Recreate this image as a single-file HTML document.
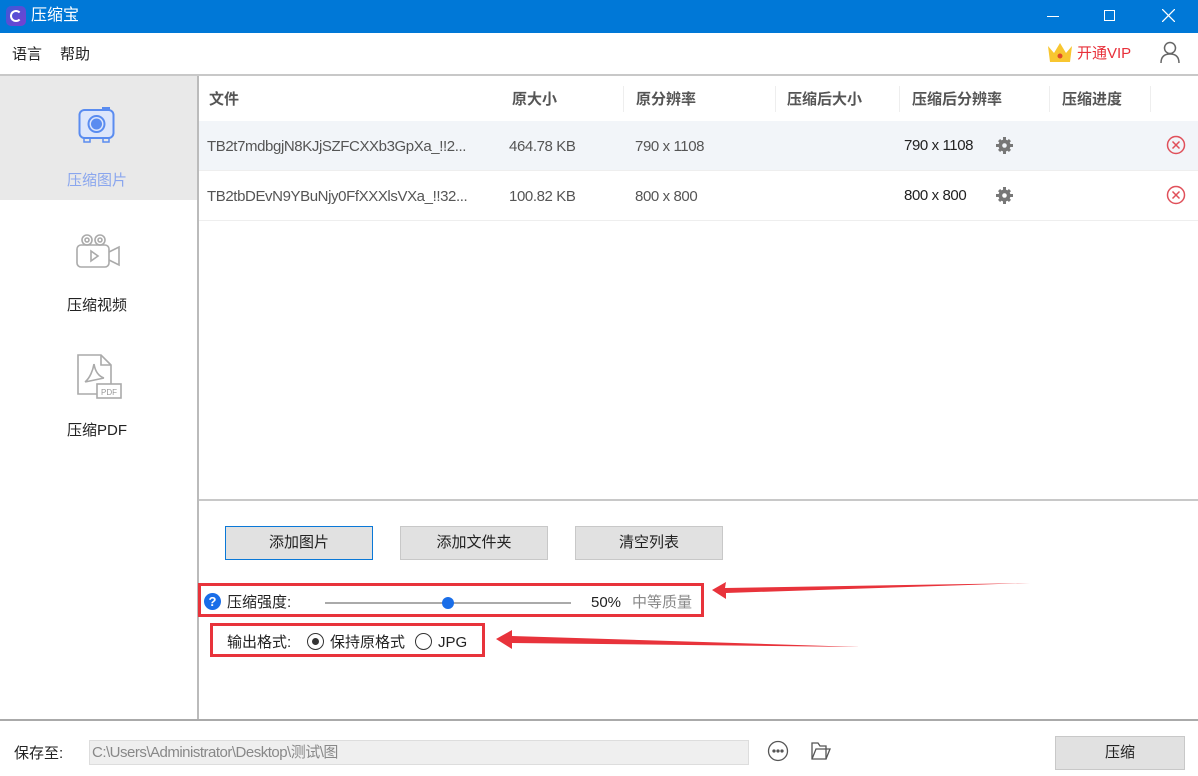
<!DOCTYPE html>
<html><head><meta charset="utf-8"><style>
*{margin:0;padding:0;box-sizing:border-box}
body{width:1198px;height:776px;position:relative;overflow:hidden;background:#fff;font-family:"Liberation Sans","Noto Sans CJK SC",sans-serif;color:#333;font-size:15px;line-height:23px}
.a{position:absolute;white-space:nowrap}
.hd{font-weight:bold;color:#555;font-size:15px}
.cell{color:#555;font-size:15px;letter-spacing:-0.4px}
.btn{position:absolute;background:#e1e1e1;border:1px solid #c8c8c8;text-align:center;line-height:32px;font-size:15px;color:#222}
.sep{position:absolute;width:1px;background:#eee;top:86px;height:26px}
</style></head><body>
<div class="a" style="left:0;top:0;width:1198px;height:33px;background:#0078d7"></div>
<div class="a" style="left:6px;top:6px;width:20px;height:20px;border-radius:5px;background:linear-gradient(135deg,#3a5bd9,#7a3fd0)"></div>
<div class="a" style="left:10px;top:10px;width:12px;height:12px;border-radius:50%;border:2px solid #fff;border-right-color:transparent"></div>
<div class="a" style="left:31px;top:4px;color:#fff;font-size:16px">压缩宝</div>
<div class="a" style="left:1047px;top:16px;width:12px;height:1px;background:#fff"></div>
<div class="a" style="left:1104px;top:10px;width:11px;height:11px;border:1px solid #fff"></div>
<svg class="a" style="left:1162px;top:9px" width="13" height="13"><path d="M0 0L13 13M13 0L0 13" stroke="#fff" stroke-width="1.3"/></svg>
<div class="a" style="left:12px;top:43px;font-size:15px;color:#222">语言</div>
<div class="a" style="left:60px;top:43px;font-size:15px;color:#222">帮助</div>
<svg class="a" style="left:1046px;top:40px" width="28" height="24"><path d="M2 6L8 13L14 3L20 13L26 6L24 22H4Z" fill="#f8c630"/><circle cx="14" cy="16" r="2.5" fill="#e04a2a"/></svg>
<div class="a" style="left:1077px;top:42px;color:#e8303a;font-size:15px">开通VIP</div>
<svg class="a" style="left:1160px;top:41px" width="20" height="22"><circle cx="10" cy="7" r="5.5" fill="none" stroke="#666" stroke-width="1.5"/><path d="M1 22C1 15 5 13 10 13C15 13 19 15 19 22" fill="none" stroke="#666" stroke-width="1.5"/></svg>
<div class="a" style="left:0;top:74px;width:1198px;height:2px;background:#c8c8c8"></div>
<div class="a" style="left:0;top:76px;width:198px;height:124px;background:#e9e9e9"></div>
<div class="a" style="left:197px;top:76px;width:2px;height:644px;background:#bbb"></div>
<svg class="a" style="left:78px;top:106px" width="38" height="38"><rect x="1.5" y="4" width="34" height="28" rx="5" fill="#dde6fb" stroke="#5a8cf0" stroke-width="2"/><rect x="24" y="1" width="8" height="4" fill="#5a8cf0"/><circle cx="18.5" cy="18" r="8" fill="none" stroke="#5a8cf0" stroke-width="2"/><circle cx="18.5" cy="18" r="5.5" fill="#5a8cf0"/><rect x="6" y="32" width="6" height="4" fill="none" stroke="#5a8cf0" stroke-width="1.5"/><rect x="25" y="32" width="6" height="4" fill="none" stroke="#5a8cf0" stroke-width="1.5"/></svg>
<div class="a" style="left:67px;top:169px;color:#8aa6ee;font-size:15px">压缩图片</div>
<svg class="a" style="left:74px;top:232px" width="48" height="38" fill="none" stroke="#aaa" stroke-width="1.6"><circle cx="13" cy="8" r="5"/><circle cx="13" cy="8" r="2"/><circle cx="26" cy="8" r="5"/><circle cx="26" cy="8" r="2"/><rect x="3" y="13" width="32" height="22" rx="4"/><path d="M35 20L45 15V33L35 28"/><path d="M17 19L24 24L17 29Z"/></svg>
<div class="a" style="left:67px;top:294px;color:#222;font-size:15px">压缩视频</div>
<svg class="a" style="left:73px;top:354px" width="50" height="46" fill="none" stroke="#aaa" stroke-width="1.6"><path d="M5 1H28L38 11V40H5Z" /><path d="M28 1V11H38"/><path d="M21 10C20 16 17 24 12 28M21 10C22 16 25 22 31 24M12 28L31 24"/><rect x="24" y="30" width="24" height="14" fill="#fff"/><text x="28" y="41" font-size="8" fill="#999" stroke="none" font-family="Liberation Sans">PDF</text></svg>
<div class="a" style="left:67px;top:419px;color:#222;font-size:15px">压缩PDF</div>
<div class="a" style="left:199px;top:121px;width:999px;height:49px;background:#f2f5f9"></div>
<div class="a" style="left:199px;top:170px;width:999px;height:1px;background:#eee"></div>
<div class="a" style="left:199px;top:220px;width:999px;height:1px;background:#eee"></div>
<div class="a hd" style="left:209px;top:88px">文件</div>
<div class="a hd" style="left:512px;top:88px">原大小</div>
<div class="a hd" style="left:636px;top:88px">原分辨率</div>
<div class="a hd" style="left:787px;top:88px">压缩后大小</div>
<div class="a hd" style="left:912px;top:88px">压缩后分辨率</div>
<div class="a hd" style="left:1062px;top:88px">压缩进度</div>
<div class="sep" style="left:623px"></div><div class="sep" style="left:775px"></div><div class="sep" style="left:899px"></div><div class="sep" style="left:1049px"></div><div class="sep" style="left:1150px"></div>
<div class="a cell" style="left:207px;top:135px">TB2t7mdbgjN8KJjSZFCXXb3GpXa_!!2...</div>
<div class="a cell" style="left:509px;top:135px">464.78 KB</div>
<div class="a cell" style="left:635px;top:135px">790 x 1108</div>
<div class="a cell" style="left:904px;top:134px;color:#222">790 x 1108</div>
<div class="a cell" style="left:207px;top:185px">TB2tbDEvN9YBuNjy0FfXXXlsVXa_!!32...</div>
<div class="a cell" style="left:509px;top:185px">100.82 KB</div>
<div class="a cell" style="left:635px;top:185px">800 x 800</div>
<div class="a cell" style="left:904px;top:184px;color:#222">800 x 800</div>
<svg class="a" style="left:996px;top:137px" width="17" height="17"><g fill="#777"><circle cx="8.5" cy="8.5" r="6"/><path d="M7 0h3v4H7zM7 13h3v4H7zM0 7h4v3H0zM13 7h4v3h-4z"/><path d="M2 4.1L4.1 2 6.5 4.4 4.4 6.5zM12.9 15L15 12.9 12.6 10.5 10.5 12.6zM2 12.9L4.1 15 6.5 12.6 4.4 10.5zM15 4.1L12.9 2 10.5 4.4 12.6 6.5z"/></g><circle cx="8.5" cy="8.5" r="2.3" fill="#f2f5f9"/></svg>
<svg class="a" style="left:996px;top:187px" width="17" height="17"><g fill="#777"><circle cx="8.5" cy="8.5" r="6"/><path d="M7 0h3v4H7zM7 13h3v4H7zM0 7h4v3H0zM13 7h4v3h-4z"/><path d="M2 4.1L4.1 2 6.5 4.4 4.4 6.5zM12.9 15L15 12.9 12.6 10.5 10.5 12.6zM2 12.9L4.1 15 6.5 12.6 4.4 10.5zM15 4.1L12.9 2 10.5 4.4 12.6 6.5z"/></g><circle cx="8.5" cy="8.5" r="2.3" fill="#fff"/></svg>
<svg class="a" style="left:1166px;top:135px" width="20" height="20" fill="none" stroke="#e0505a" stroke-width="1.5"><circle cx="10" cy="10" r="8.5"/><path d="M6.5 6.5L13.5 13.5M13.5 6.5L6.5 13.5"/></svg>
<svg class="a" style="left:1166px;top:185px" width="20" height="20" fill="none" stroke="#e0505a" stroke-width="1.5"><circle cx="10" cy="10" r="8.5"/><path d="M6.5 6.5L13.5 13.5M13.5 6.5L6.5 13.5"/></svg>
<div class="a" style="left:199px;top:499px;width:999px;height:2px;background:#c8c8c8"></div>
<div class="btn" style="left:225px;top:526px;width:148px;height:34px;border:1px solid #0a78d7">添加图片</div>
<div class="btn" style="left:400px;top:526px;width:148px;height:34px">添加文件夹</div>
<div class="btn" style="left:575px;top:526px;width:148px;height:34px">清空列表</div>
<div class="a" style="left:198px;top:583px;width:506px;height:34px;border:3px solid #e8333b"></div>
<div class="a" style="left:204px;top:593px;width:17px;height:17px;border-radius:50%;background:#1a6ee8;color:#fff;font-size:13px;font-weight:bold;text-align:center;line-height:17px">?</div>
<div class="a" style="left:227px;top:591px;color:#222">压缩强度:</div>
<div class="a" style="left:325px;top:602px;width:246px;height:2px;background:#aaa"></div>
<div class="a" style="left:442px;top:597px;width:12px;height:12px;border-radius:50%;background:#1a6ee8"></div>
<div class="a" style="left:591px;top:591px;color:#222">50%</div>
<div class="a" style="left:632px;top:591px;color:#888">中等质量</div>
<svg class="a" style="left:700px;top:575px" width="340" height="90"><path d="M12 15L26 7L25 13L330 8L26 18L26 24Z" fill="#e8333b"/></svg>
<div class="a" style="left:210px;top:623px;width:275px;height:34px;border:3px solid #e8333b"></div>
<div class="a" style="left:227px;top:631px;color:#222">输出格式:</div>
<div class="a" style="left:307px;top:633px;width:17px;height:17px;border-radius:50%;border:1px solid #333"></div>
<div class="a" style="left:312px;top:638px;width:7px;height:7px;border-radius:50%;background:#333"></div>
<div class="a" style="left:330px;top:631px;color:#222">保持原格式</div>
<div class="a" style="left:415px;top:633px;width:17px;height:17px;border-radius:50%;border:1px solid #333"></div>
<div class="a" style="left:438px;top:631px;color:#222">JPG</div>
<svg class="a" style="left:490px;top:625px" width="380" height="30"><path d="M6 14L22 5L22 11L370 22L22 18L22 24Z" fill="#e8333b"/></svg>
<div class="a" style="left:0;top:719px;width:1198px;height:2px;background:#aaa"></div>
<div class="a" style="left:14px;top:742px;color:#222">保存至:</div>
<div class="a" style="left:89px;top:740px;width:660px;height:25px;background:#efefef;border:1px solid #ddd;color:#888;font-size:15px;padding-left:2px;line-height:23px;letter-spacing:-0.5px">C:\Users\Administrator\Desktop\测试\图</div>
<svg class="a" style="left:767px;top:740px" width="22" height="22" fill="none" stroke="#555" stroke-width="1.3"><circle cx="11" cy="11" r="9.5"/><circle cx="7" cy="11" r="1" fill="#555"/><circle cx="11" cy="11" r="1" fill="#555"/><circle cx="15" cy="11" r="1" fill="#555"/></svg>
<svg class="a" style="left:810px;top:740px" width="22" height="22" fill="none" stroke="#555" stroke-width="1.3"><path d="M2 3H8L10 6H16V19H2Z"/><path d="M2 19L6 9H20L16 19"/></svg>
<div class="btn" style="left:1055px;top:736px;width:130px;height:34px">压缩</div>
</body></html>
